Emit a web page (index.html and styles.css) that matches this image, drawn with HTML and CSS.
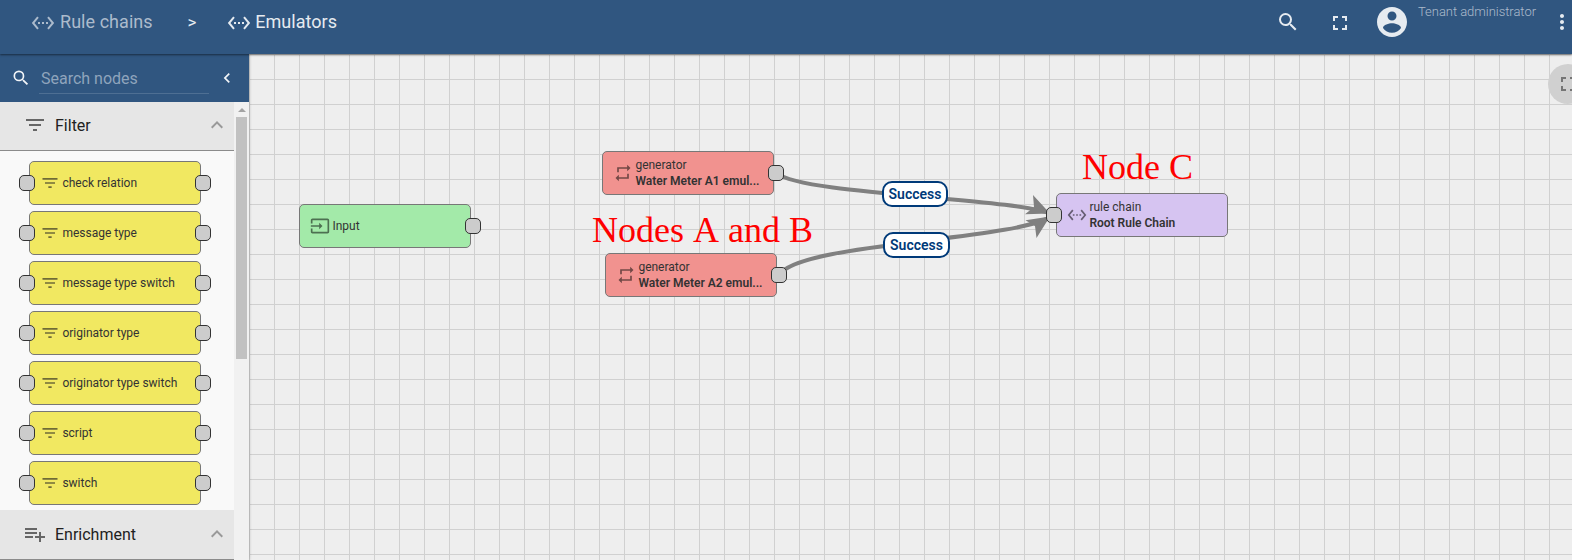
FILE: index.html
```
<!DOCTYPE html>
<html lang="en">
<head>
<meta charset="utf-8">
<title>Emulators</title>
<link rel="stylesheet" href="styles.css">
</head>
<body>
<svg class="defs" width="0" height="0" aria-hidden="true">
  <symbol id="chain" viewBox="0 0 24 24"><path d="M7.77 6.76L6.23 5.48.82 12l5.41 6.52 1.54-1.28L3.42 12l4.35-5.24zM7 13h2v-2H7v2zm10-2h-2v2h2v-2zm-6 2h2v-2h-2v2zm6.77-7.52l-1.54 1.28L20.58 12l-4.35 5.24 1.54 1.28L23.18 12l-5.41-6.52z"/></symbol>
  <symbol id="search" viewBox="0 0 24 24"><path d="M15.5 14h-.79l-.28-.27A6.47 6.47 0 0 0 16 9.5 6.5 6.5 0 1 0 9.500 16c1.610 0 3.090-.59 4.230-1.570l.27.28v.79l5 4.990L20.490 19l-4.990-5zm-6 0a4.500 4.500 0 1 1 0-9 4.500 4.500 0 0 1 0 9z"/></symbol>
  <symbol id="full" viewBox="0 0 24 24"><path d="M7 14H5v5h5v-2H7v-3zm-2-4h2V7h3V5H5v5zm12 7h-3v2h5v-5h-2v3zM14 5v2h3v3h2V5h-5z"/></symbol>
  <symbol id="user" viewBox="0 0 24 24"><path d="M12 2C6.480 2 2 6.480 2 12s4.480 10 10 10 10-4.480 10-10S17.520 2 12 2zm0 3c1.660 0 3 1.340 3 3s-1.340 3-3 3-3-1.340-3-3 1.340-3 3-3zm0 14.200c-2.500 0-4.710-1.280-6-3.220.03-1.990 4-3.080 6-3.080 1.990 0 5.970 1.090 6 3.080-1.290 1.940-3.500 3.220-6 3.220z"/></symbol>
  <symbol id="more" viewBox="0 0 24 24"><path d="M12 8c1.100 0 2-.9 2-2s-.9-2-2-2-2 .9-2 2 .9 2 2 2zm0 2c-1.100 0-2 .9-2 2s.9 2 2 2 2-.9 2-2-.9-2-2-2zm0 6c-1.100 0-2 .9-2 2s.9 2 2 2 2-.9 2-2-.9-2-2-2z"/></symbol>
  <symbol id="left" viewBox="0 0 24 24"><path d="M15.410 7.410L14 6l-6 6 6 6 1.410-1.410L10.830 12z"/></symbol>
  <symbol id="up" viewBox="0 0 24 24"><path d="M12 8l-6 6 1.410 1.410L12 10.830l4.590 4.580L18 14z"/></symbol>
  <symbol id="filter" viewBox="0 0 24 24"><path d="M10 18h4v-2h-4v2zM3 6v2h18V6H3zm3 7h12v-2H6v2z"/></symbol>
  <symbol id="enrich" viewBox="0 0 24 24"><path d="M14 10H2v2h12v-2zm0-4H2v2h12V6zm4 8v-4h-2v4h-4v2h4v4h2v-4h4v-2h-4zM2 16h8v-2H2v2z"/></symbol>
  <symbol id="repeat" viewBox="0 0 24 24"><path d="M7 7h10v3l4-4-4-4v3H5v6h2V7zm10 10H7v-3l-4 4 4 4v-3h12v-6h-2v4z"/></symbol>
  <symbol id="input" viewBox="0 0 24 24"><path d="M21 3.010H3c-1.100 0-2 .9-2 2V9h2V4.990h18v14.030H3V15H1v4.010c0 1.100.9 1.980 2 1.980h18c1.100 0 2-.88 2-1.980v-14c0-1.110-.9-2-2-2zM11 16l4-4-4-4v3H1v2h10v3z"/></symbol>
</svg>

<div class="app">
  <header class="toolbar">
    <nav class="crumbs">
      <span class="crumb muted"><svg class="icon"><use href="#chain"/></svg><span>Rule chains</span></span>
      <span class="separator">&gt;</span>
      <span class="crumb current"><svg class="icon"><use href="#chain"/></svg><span>Emulators</span></span>
    </nav>
    <div class="actions">
      <svg class="icon"><use href="#search"/></svg>
      <svg class="icon expand"><use href="#full"/></svg>
      <svg class="avatar"><use href="#user"/></svg>
      <span class="role">Tenant administrator</span>
      <svg class="icon more"><use href="#more"/></svg>
    </div>
  </header>

  <div class="workspace">
    <aside class="library">
      <div class="search">
        <svg class="icon small"><use href="#search"/></svg>
        <span class="field">Search nodes</span>
        <svg class="icon small collapse"><use href="#left"/></svg>
      </div>
      <div class="scroller">
        <div class="groups">
          <div class="group-title first"><svg class="icon"><use href="#filter"/></svg><span>Filter</span><svg class="icon chevron"><use href="#up"/></svg></div>
          <div class="node-list">
            <div class="node filter"><i class="port in"></i><svg class="glyph"><use href="#filter"/></svg><span>check relation</span><i class="port out"></i></div>
            <div class="node filter"><i class="port in"></i><svg class="glyph"><use href="#filter"/></svg><span>message type</span><i class="port out"></i></div>
            <div class="node filter"><i class="port in"></i><svg class="glyph"><use href="#filter"/></svg><span>message type switch</span><i class="port out"></i></div>
            <div class="node filter"><i class="port in"></i><svg class="glyph"><use href="#filter"/></svg><span>originator type</span><i class="port out"></i></div>
            <div class="node filter"><i class="port in"></i><svg class="glyph"><use href="#filter"/></svg><span>originator type switch</span><i class="port out"></i></div>
            <div class="node filter"><i class="port in"></i><svg class="glyph"><use href="#filter"/></svg><span>script</span><i class="port out"></i></div>
            <div class="node filter"><i class="port in"></i><svg class="glyph"><use href="#filter"/></svg><span>switch</span><i class="port out"></i></div>
          </div>
          <div class="group-title"><svg class="icon"><use href="#enrich"/></svg><span>Enrichment</span><svg class="icon chevron"><use href="#up"/></svg></div>
        </div>
        <div class="scrollbar"><i class="arrow"></i><i class="thumb"></i></div>
      </div>
    </aside>

    <main class="canvas">
      <svg class="edges" viewBox="249 54 1323 506" width="1323" height="506">
        <path class="edge" d="M776 173C806 196 1016 197 1054 215"/>
        <path class="edge" d="M779 275C800 242 1016 241.500 1054 215"/>
        <polygon points="1033,195 1050,213.500 1025,214.300 1034,207"/>
        <polygon points="1036.500,238 1050,216.500 1025.500,220.300 1035,226"/>
      </svg>
      <div class="node input at-input"><svg class="glyph"><use href="#input"/></svg><span>Input</span><i class="port out"></i></div>
      <div class="node action at-a"><svg class="glyph"><use href="#repeat"/></svg><span>generator<b>Water Meter A1 emul...</b></span><i class="port out"></i></div>
      <div class="node action at-b"><svg class="glyph"><use href="#repeat"/></svg><span>generator<b>Water Meter A2 emul...</b></span><i class="port out"></i></div>
      <div class="node chain at-c"><i class="port in"></i><svg class="glyph"><use href="#chain"/></svg><span>rule chain<b>Root Rule Chain</b></span></div>
      <div class="label label-a">Success</div>
      <div class="label label-b">Success</div>
      <div class="note note-ab">Nodes A and B</div>
      <div class="note note-c">Node C</div>
      <div class="fab"><svg class="icon"><use href="#full"/></svg></div>
    </main>
  </div>
</div>
</body>
</html>
```

FILE: styles.css
```
* { box-sizing: border-box; }
body { margin: 0; font-family: Roboto, sans-serif; color: #212121; overflow: hidden; }
svg { flex: none; fill: currentColor; }
.defs { position: absolute; }
.app { display: flex; flex-direction: column; width: 1572px; height: 560px; overflow: hidden; }
.icon { width: 24px; height: 24px; }

.toolbar { position: relative; z-index: 3; display: flex; justify-content: space-between; height: 54px; background: #305680; color: #e6ebf0; box-shadow: 0 1px 2px rgba(0,0,0,.5); }
.crumbs { display: flex; align-items: flex-start; padding: 10px 0 0 31px; font-size: 18px; line-height: 24px; letter-spacing: .05px; }
.crumb { display: flex; gap: 5px; }
.current { gap: 4px; }
.crumb .icon { margin-top: 1px; }
.muted { color: #acbbcc; }
.separator { width: 74.500px; padding-left: 4px; text-align: center; font-size: 17px; }
.actions { display: flex; align-items: flex-start; padding-top: 10px; }
.expand { margin: 1px 0 0 28px; }
.avatar { width: 36px; height: 36px; margin: -6px 0 0 22px; }
.role { margin: -8px 0 0 8px; font-size: 13px; line-height: 19px; font-weight: 300; letter-spacing: -.04px; color: #acbbcc; width: 118px; white-space: nowrap; }
.more { margin: 0 -2px 0 14px; }

.workspace { display: flex; flex: 1; min-height: 0; }
.library { position: relative; z-index: 2; display: flex; flex-direction: column; width: 249px; box-shadow: 0 0 3px rgba(0,0,0,.3); }
.search { display: flex; align-items: center; height: 48px; flex: none; padding-left: 11px; background: #305680; color: #f2f5f8; }
.small { width: 20px; height: 20px; }
.field { width: 170px; height: 30px; margin: 1px 0 0 8px; padding-left: 2px; border-bottom: 1px solid #4e6f93; color: #8fa4bc; font-size: 16px; line-height: 30px; }
.collapse { margin-left: 8px; }
.scroller { display: flex; flex: 1; min-height: 0; }
.groups { width: 234px; background: #f9f9f9; overflow: hidden; }
.group-title { display: flex; align-items: center; height: 50px; padding: 0 0 1px 23px; border-bottom: 1px solid #8b8b8b; background: #e6e6e6; font-size: 16px; }
.first { height: 49px; padding-bottom: 2px; }
.group-title .icon { color: #666; }
.group-title span { width: 150px; margin-left: 8px; }
.group-title .chevron { color: #999; }
.node-list { display: flex; flex-direction: column; gap: 6px; padding: 10px 0 5px 29px; }
.scrollbar { width: 15px; padding: 6px 2px; background: #f1f1f1; }
.scrollbar i { display: block; }
.arrow { width: 0; margin: 0 auto 5px; border: 4px solid transparent; border-top: 0; border-bottom-color: #a3a3a3; }
.thumb { height: 242px; background: #c1c1c1; }

.node { position: relative; display: flex; align-items: center; width: 172px; height: 44px; border: 1px solid #777; border-radius: 5px; font-size: 12px; line-height: 16px; color: #333; }
.node b { display: block; font-weight: 600; }
.glyph { width: 20px; height: 20px; margin-right: 2.4px; }
.filter { padding-left: 10px; background: #f1e861; }
.filter .glyph { color: #6f6b37; }
.port { position: absolute; top: 13px; width: 16px; height: 16px; border: 1px solid #333; border-radius: 5px; background: #ccc; }
.in { left: -11px; }
.out { right: -11px; }

.canvas { position: relative; flex: 1; overflow: hidden; background-color: #eee; background-image: linear-gradient(to right, #d0d0d0 1px, transparent 1px), linear-gradient(to bottom, #d0d0d0 1px, transparent 1px); background-size: 25px 25px; }
.edges { position: absolute; left: 0; top: 0; }
.edge { fill: none; stroke: gray; stroke-width: 4px; }
.edges polygon { fill: gray; }
.canvas .node { position: absolute; white-space: nowrap; }
.input { padding-left: 10px; background: #a3eaa9; }
.input .glyph { color: #4d7051; }
.action { padding-left: 10px; background: #f1928f; }
.action .glyph { color: #734846; }
.chain { padding-left: 10px; background: #d6c4f1; }
.chain .glyph { color: #665d73; }
.at-input { left: 50px; top: 150px; }
.at-a { left: 353px; top: 97px; }
.at-b { left: 356px; top: 199px; }
.at-c { left: 807px; top: 139px; }
.label { position: absolute; width: 67px; height: 26px; border: 2px solid #003a79; border-radius: 10px; background: #fff; color: #003a79; font-size: 14px; font-weight: 600; line-height: 22px; text-align: center; }
.label-a { left: 633px; top: 127px; width: 66px; }
.label-b { left: 634px; top: 178px; }
.note { position: absolute; color: #f00; font-family: "Liberation Serif", serif; font-size: 36px; font-kerning: none; line-height: 40px; white-space: nowrap; }
.note-ab { left: 343px; top: 156px; }
.note-c { left: 833px; top: 93px; }
.fab { position: absolute; left: 1299px; top: 10px; display: flex; align-items: center; justify-content: center; width: 40px; height: 40px; border-radius: 50%; background: #d0d0d0; color: #757575; }
```
